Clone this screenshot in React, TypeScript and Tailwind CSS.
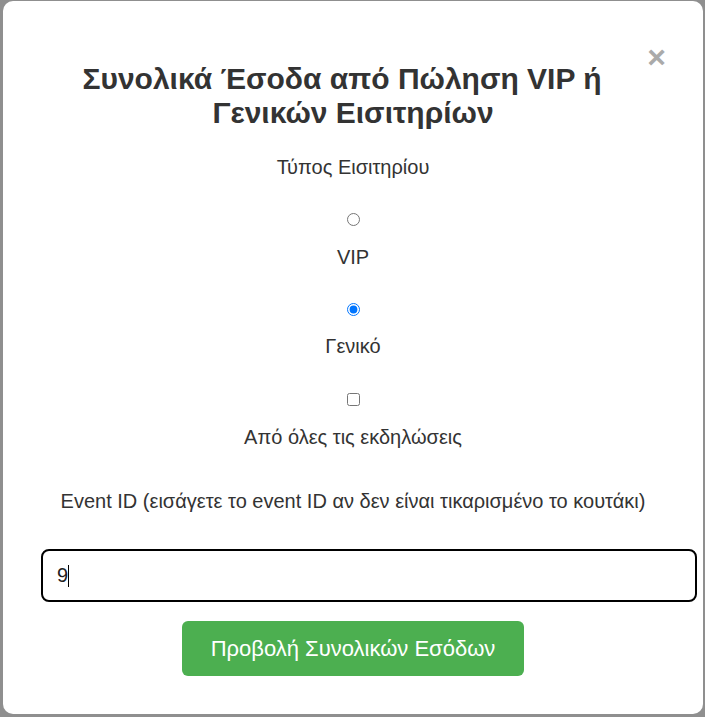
import React, { useState } from "react";

const App: React.FC = () => {
  const [ticketType, setTicketType] = useState<string>("general");
  const [allEvents, setAllEvents] = useState<boolean>(false);
  const [eventId, setEventId] = useState<string>("9");

  return (
    <div className="w-[705px] h-[717px] bg-[#8f8f8f] pt-[1px] pl-[3px] font-['Liberation_Sans',Arial,sans-serif]">
      {/* Modal */}
      <div className="relative w-[700px] h-[713px] bg-white rounded-[10px] text-[#333]">
        <button className="absolute right-[37px] top-[38px] text-[32px] leading-[36px] font-bold text-[#aaa] cursor-pointer">
          ×
        </button>

        <h2 className="pt-[61px] text-center text-[30px] leading-[34px] font-bold text-[#333]">
          <span className="block pr-[22px]">Συνολικά Έσοδα από Πώληση VIP ή</span>
          <span className="block">Γενικών Εισιτηρίων</span>
        </h2>

        <div className="flex flex-col items-center text-[20px] leading-[22px]">
          <p className="mt-[26px]">Τύπος Εισιτηρίου</p>

          <input
            type="radio"
            name="ticketType"
            className="mt-[35px] w-[13px] h-[13px]"
            checked={ticketType === "vip"}
            onChange={() => setTicketType("vip")}
          />
          <label className="mt-[20px]">VIP</label>

          <input
            type="radio"
            name="ticketType"
            className="mt-[35px] w-[13px] h-[13px]"
            checked={ticketType === "general"}
            onChange={() => setTicketType("general")}
          />
          <label className="mt-[19px]">Γενικό</label>

          <input
            type="checkbox"
            className="mt-[36px] w-[13px] h-[13px]"
            checked={allEvents}
            onChange={(e) => setAllEvents(e.target.checked)}
          />
          <label className="mt-[20px]">Από όλες τις εκδηλώσεις</label>

          <label className="mt-[42px]">
            Event ID (εισάγετε το event ID αν δεν είναι τικαρισμένο το κουτάκι)
          </label>
        </div>

        <div className="relative mt-[37px] pl-[38px] pr-[6px]">
          <input
            type="text"
            value={eventId}
            onChange={(e) => setEventId(e.target.value)}
            className="w-full h-[53px] border-2 border-black rounded-[8px] px-[14px] text-[20px] text-[#222] outline-none"
          />
          {/* text caret */}
          <span className="absolute left-[65px] top-[16px] w-px h-[22px] bg-black" />
        </div>

        <div className="flex justify-center mt-[19px]">
          <button className="w-[342px] h-[55px] bg-[#4caf50] rounded-[6px] text-white text-[22px] cursor-pointer">
            Προβολή Συνολικών Εσόδων
          </button>
        </div>
      </div>
    </div>
  );
};

export default App;
